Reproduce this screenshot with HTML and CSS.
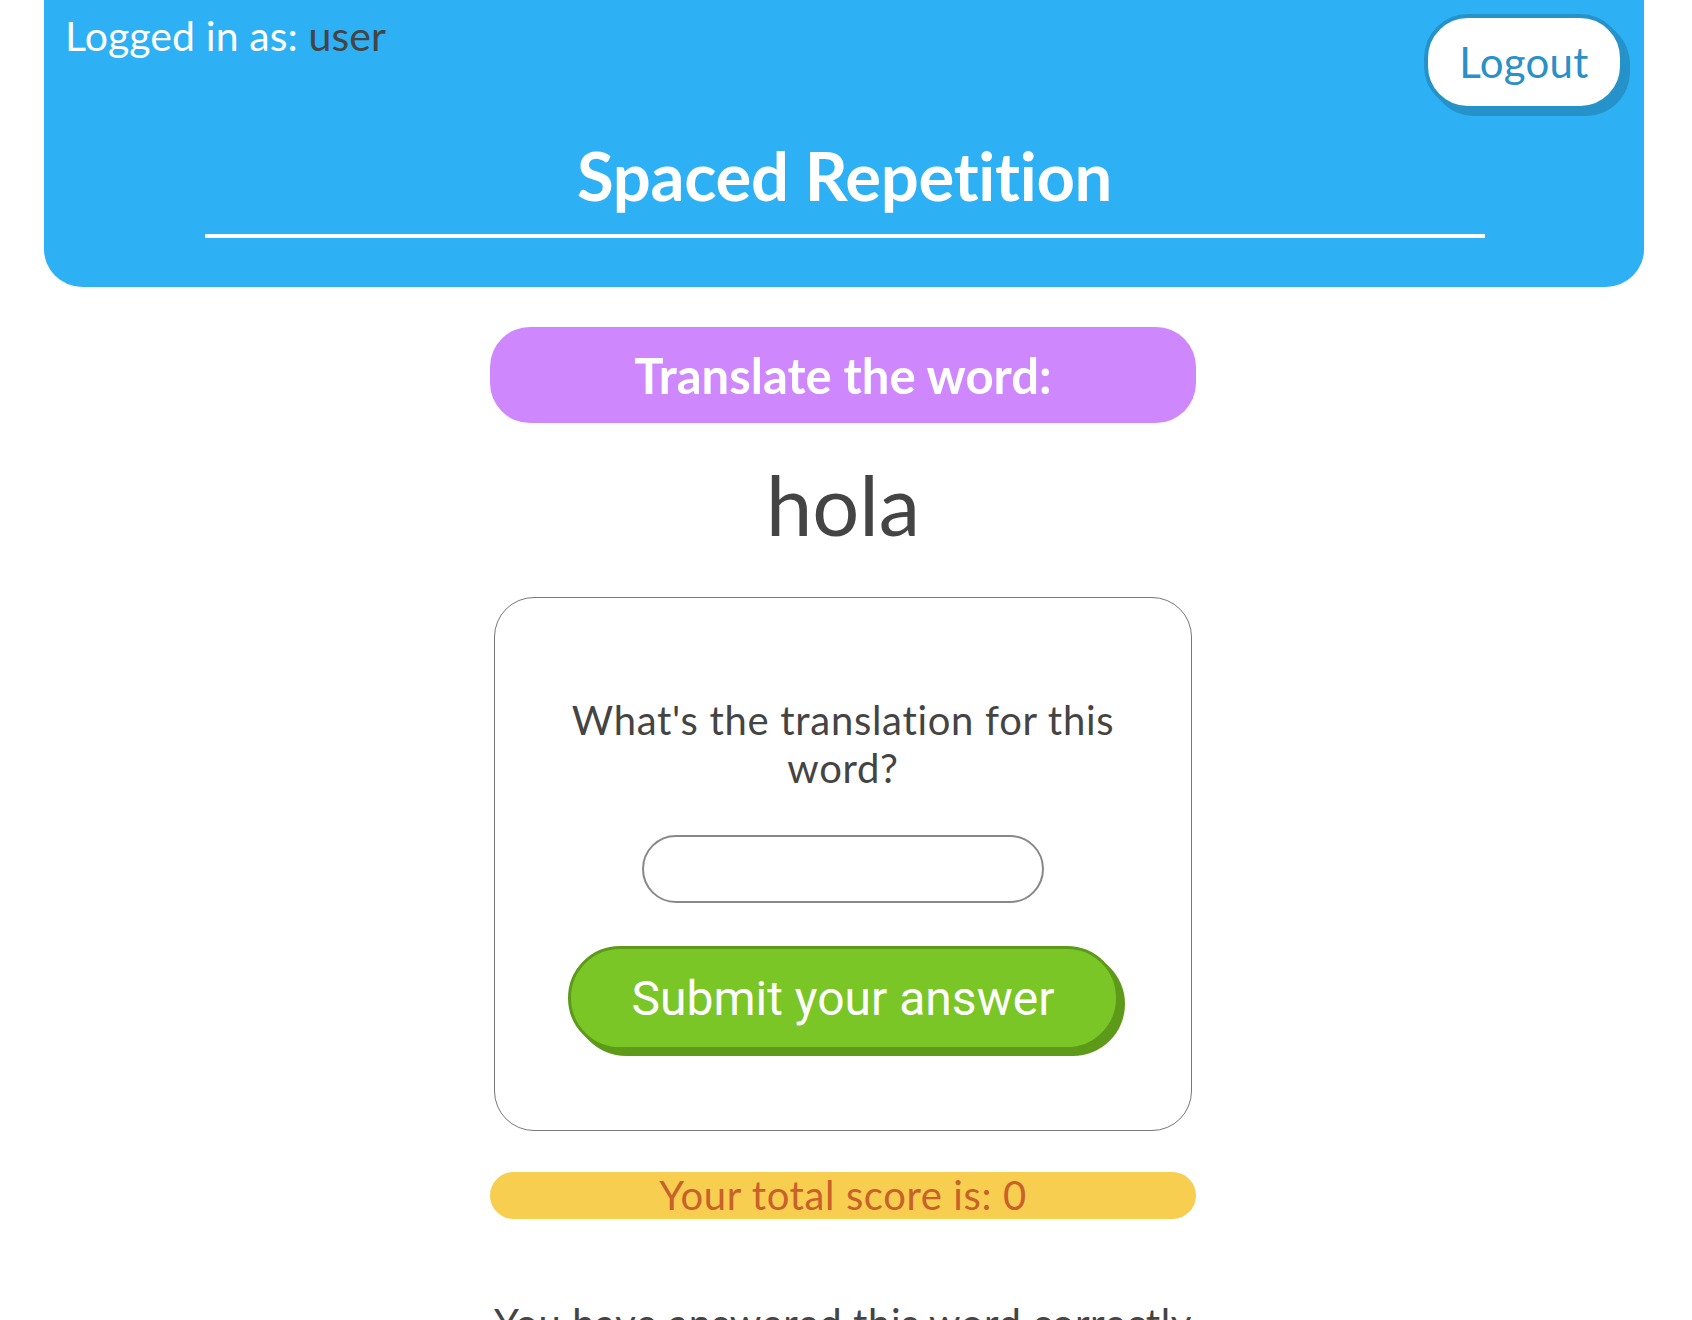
FILE: index.html
```html
<!DOCTYPE html>
<html lang="en">
<head>
<meta charset="utf-8">
<title>Spaced Repetition</title>
<link rel="stylesheet" href="styles.css">
</head>
<body>
<div class="page">
  <header class="topbar">
    <div class="top-row">
      <div class="user-info">Logged in as: <span class="username">user</span></div>
      <button class="logout" type="button">Logout</button>
    </div>
    <h1 class="title">Spaced Repetition</h1>
  </header>
  <main class="learning">
    <h2 class="prompt">Translate the word:</h2>
    <div class="word">hola</div>
    <form class="card">
      <label class="question" for="answer">What's the translation for this word?</label>
      <input class="answer" id="answer" type="text">
      <button class="submit" type="button">Submit your answer</button>
    </form>
    <div class="score">Your total score is: 0</div>
    <p class="stats">You have answered this word correctly 0 times.</p>
  </main>
</div>
</body>
</html>
```

FILE: styles.css
```css
html, body {
  margin: 0;
  padding: 0;
  background: #ffffff;
}
body {
  font-family: Lato, "Open Sans", sans-serif;
  color: #444444;
}
.page {
  padding-right: 6px;
}
.topbar {
  margin: 0 42px 0 44px;
  background: #2db0f4;
  border-radius: 0 0 38px 38px;
  padding: 14px 20px 49px 21px;
  display: flex;
  flex-direction: column;
  align-items: center;
}
.top-row {
  align-self: stretch;
  display: flex;
  justify-content: space-between;
  align-items: flex-start;
}
.user-info {
  color: #ffffff;
  font-size: 41px;
  letter-spacing: 0.1px;
  line-height: 48px;
  margin-top: -2px;
}
.username {
  color: #444444;
}
.logout {
  width: 200px;
  height: 96px;
  border: 4px solid #2592c9;
  box-shadow: 6px 6px 0 #2592c9;
  border-radius: 44px;
  background: #ffffff;
  color: #2a90c8;
  font-family: Lato, "Open Sans", sans-serif;
  font-size: 42px;
  letter-spacing: 0.3px;
  padding: 0;
}
.title {
  margin: 23px 0 0;
  width: 1280px;
  text-align: center;
  color: #ffffff;
  font-size: 67px;
  font-weight: 700;
  letter-spacing: -0.3px;
  line-height: 84px;
  padding-bottom: 17px;
  border-bottom: 4px solid #ffffff;
}
.learning {
  width: 706px;
  margin: 40px auto 0;
  display: flex;
  flex-direction: column;
  align-items: center;
}
.prompt {
  margin: 0;
  align-self: stretch;
  height: 96px;
  background: #ce87fc;
  border-radius: 40px;
  color: #ffffff;
  font-size: 49px;
  font-weight: 700;
  line-height: 96px;
  text-align: center;
}
.word {
  margin-top: 31px;
  font-size: 83px;
  line-height: 100px;
  color: #444444;
}
.card {
  margin-top: 43px;
  box-sizing: border-box;
  width: 698px;
  height: 534px;
  border: 1.5px solid #777777;
  border-radius: 40px;
  display: flex;
  flex-direction: column;
  align-items: center;
  padding: 98px 40px 0;
}
.question {
  font-size: 40px;
  letter-spacing: 0.7px;
  line-height: 48px;
  text-align: center;
  color: #444444;
  max-width: 580px;
}
.answer {
  margin-top: 43px;
  box-sizing: border-box;
  width: 402px;
  height: 68px;
  border: 2px solid #888888;
  border-radius: 34px;
  background: #ffffff;
  font-size: 32px;
}
.submit {
  margin-top: 43px;
  box-sizing: border-box;
  width: 551px;
  height: 104px;
  background: #7ac626;
  border: 3px solid #5d9a1a;
  box-shadow: 6px 6px 0 #5d9a1a;
  border-radius: 52px;
  color: #ffffff;
  font-family: Roboto, "Liberation Sans", sans-serif;
  font-size: 48px;
  padding: 0;
}
.score {
  margin-top: 41px;
  align-self: stretch;
  height: 47px;
  background: #f7ce50;
  border-radius: 24px;
  color: #c8612a;
  font-size: 40px;
  letter-spacing: 0.6px;
  line-height: 47px;
  text-align: center;
}
.stats {
  margin: 80px 0 0;
  font-size: 40px;
  letter-spacing: 0.6px;
  line-height: 48px;
  text-align: center;
  color: #444444;
}
```
